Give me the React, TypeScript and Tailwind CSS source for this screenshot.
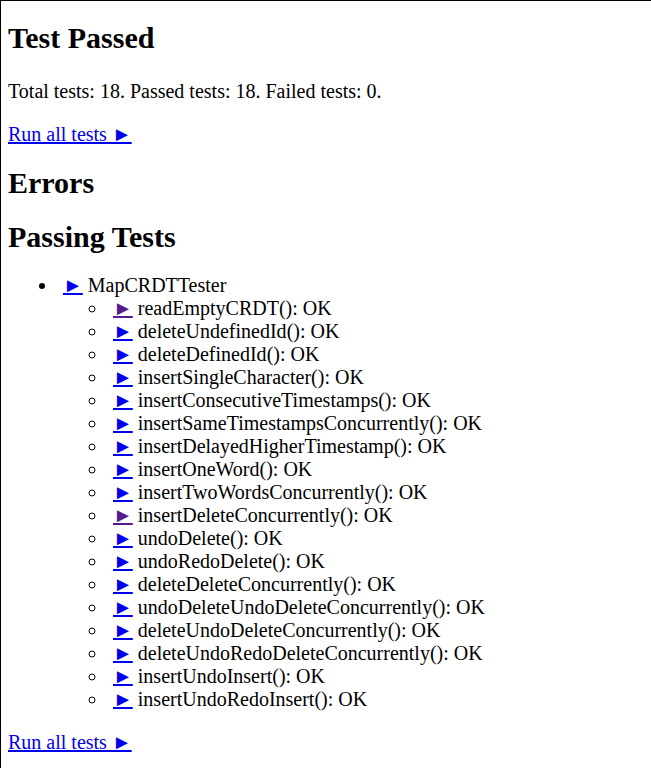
const tests: { name: string; visited?: boolean }[] = [
  { name: "readEmptyCRDT", visited: true },
  { name: "deleteUndefinedId" },
  { name: "deleteDefinedId" },
  { name: "insertSingleCharacter" },
  { name: "insertConsecutiveTimestamps" },
  { name: "insertSameTimestampsConcurrently" },
  { name: "insertDelayedHigherTimestamp" },
  { name: "insertOneWord" },
  { name: "insertTwoWordsConcurrently" },
  { name: "insertDeleteConcurrently", visited: true },
  { name: "undoDelete" },
  { name: "undoRedoDelete" },
  { name: "deleteDeleteConcurrently" },
  { name: "undoDeleteUndoDeleteConcurrently" },
  { name: "deleteUndoDeleteConcurrently" },
  { name: "deleteUndoRedoDeleteConcurrently" },
  { name: "insertUndoInsert" },
  { name: "insertUndoRedoInsert" },
];

// Link that reruns a test
function RunLink({ visited }: { visited?: boolean }) {
  return (
    <a
      href="#"
      className={
        "underline ml-[5px] " + (visited ? "text-[#551a8b]" : "text-[#0000ee]")
      }
    >
      ►
    </a>
  );
}

export default function App() {
  return (
    <div className="min-h-screen bg-white border-t border-l border-black pl-[7px] pr-2 font-['Liberation_Serif',serif] text-[20px] leading-[normal] text-black">
      <h1 className="text-[30px] font-bold mt-5 mb-[25px]">Test Passed</h1>
      <p className="my-5">Total tests: 18. Passed tests: 18. Failed tests: 0.</p>
      <p className="my-5">
        <a href="#" className="underline text-[#0000ee]">Run all tests ►</a>
      </p>

      <h2 className="text-[30px] font-bold my-5">Errors</h2>
      <h2 className="text-[30px] font-bold my-5">Passing Tests</h2>

      <ul className="list-disc pl-[50px] my-5">
        <li>
          <RunLink /> MapCRDTTester
          <ul className="list-[circle] pl-[50px]">
            {tests.map((t) => (
              <li key={t.name}>
                <RunLink visited={t.visited} /> {t.name}(): OK
              </li>
            ))}
          </ul>
        </li>
      </ul>

      <p className="my-5 pb-5">
        <a href="#" className="underline text-[#0000ee]">Run all tests ►</a>
      </p>
    </div>
  );
}
